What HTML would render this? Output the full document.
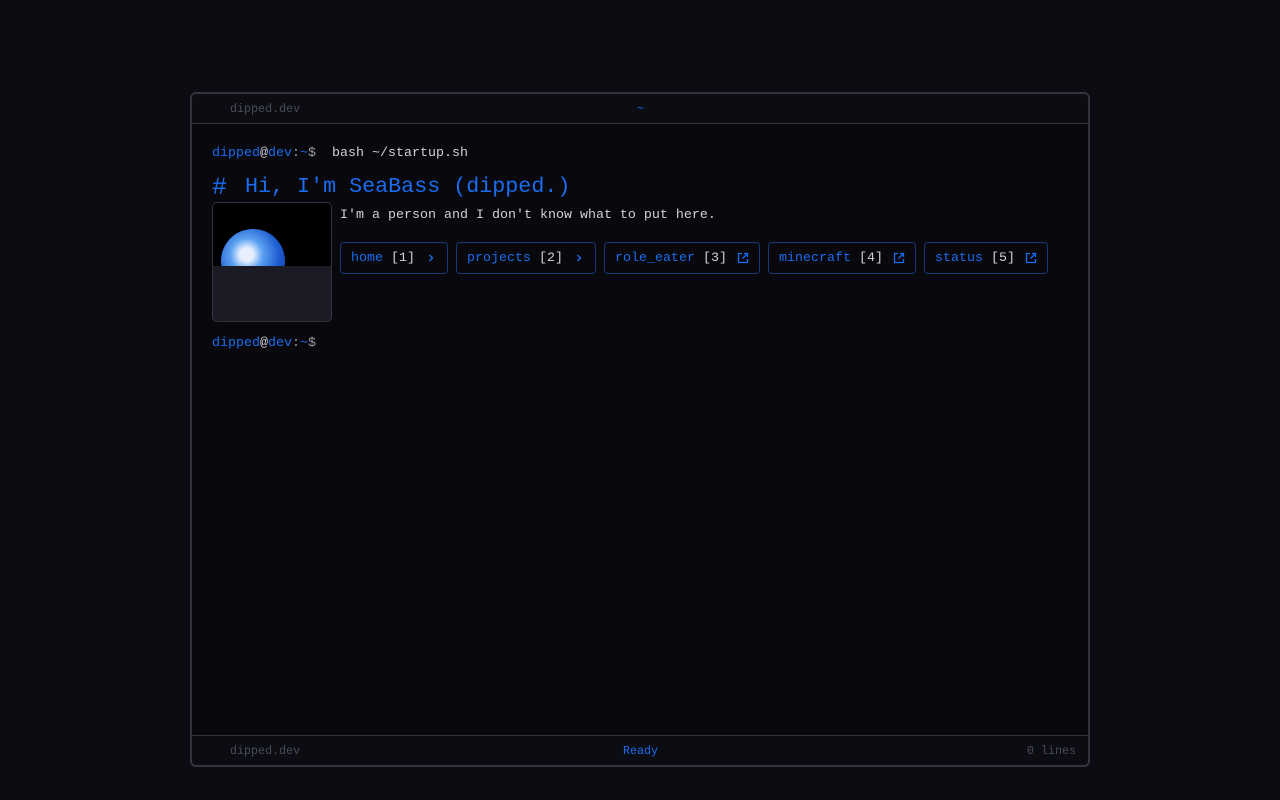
<!DOCTYPE html>
<html><head><meta charset="utf-8"><style>
*{box-sizing:border-box;margin:0;padding:0}
html,body{width:1280px;height:800px;background:#0c0d12;overflow:hidden;font-family:"Liberation Mono",monospace}
.win{position:absolute;left:190px;top:92px;width:900px;height:675px;border:2px solid #34343f;border-radius:6px;background:#08080d;overflow:hidden}
.bar{position:absolute;left:0;right:0;height:30px;background:#0c0d12;font-size:11.7px;color:#4a4b58}
.top{top:0;border-bottom:1px solid #34343f}
.bot{bottom:0;border-top:1px solid #34343f}
.bar span{position:absolute;top:8px}
.b{color:#1a6cf0}
.w{color:#d0d0d6}
.g{color:#9a9aa4}
.line{position:absolute;left:20px;font-size:13.33px;white-space:pre}
h1{position:absolute;left:20px;top:79px;font-size:21.7px;font-weight:normal;color:#1a6cf0;font-family:"Liberation Mono",monospace;white-space:pre}
h1 i{font-style:normal;display:inline-block;width:33px;font-size:25px;vertical-align:-2px}
.pic{position:absolute;left:20px;top:108px;width:120px;height:120px;border:1px solid #34343f;border-radius:5px;overflow:hidden;background:#1b1b25}
.sky{position:absolute;left:0;top:0;width:120px;height:63px;background:#000;overflow:hidden}
.earth{position:absolute;left:8px;top:26px;width:64px;height:64px;border-radius:50%;background:radial-gradient(circle at 40% 40%,#e8f0ff 0 12%,#5aa0f0 30%,#1c5cd0 60%,#0a2a8a 100%)}
.btns{position:absolute;left:148px;top:148px;display:flex;gap:8px}
.btn{height:32px;border:1px solid #173a7a;border-radius:4px;padding:0 10px;display:flex;align-items:center;font-size:13.33px;white-space:pre}
.btn svg{margin-left:10px}
</style></head><body>
<div class="win">
 <div class="bar top"><span style="left:38px">dipped.dev</span><span class="b" style="left:445px">~</span></div>
 <div class="line" style="top:52px"><span class="b">dipped</span><span class="w">@</span><span class="b">dev</span><span class="g">:</span><span class="b">~</span><span class="g">$</span>  <span class="w">bash ~/startup.sh</span></div>
 <h1><i>#</i>Hi, I'm SeaBass (dipped.)</h1>
 <div class="pic"><div class="sky"><div class="earth"></div></div></div>
 <div class="line w" style="left:148px;top:114px">I'm a person and I don't know what to put here.</div>
 <div class="btns">
  <div class="btn"><span><span class="b">home</span> <span class="w">[1]</span></span><svg width="12" height="12" viewBox="0 0 12 12"><path d="M4.5 3l3 3-3 3" fill="none" stroke="#1a6cf0" stroke-width="1.4"/></svg></div>
  <div class="btn"><span><span class="b">projects</span> <span class="w">[2]</span></span><svg width="12" height="12" viewBox="0 0 12 12"><path d="M4.5 3l3 3-3 3" fill="none" stroke="#1a6cf0" stroke-width="1.4"/></svg></div>
  <div class="btn"><span><span class="b">role_eater</span> <span class="w">[3]</span></span><svg width="12" height="12" viewBox="0 0 12 12"><path d="M5 1.5H1.5v9h9V7M7 1.5h3.5V5M10.5 1.5L5.5 6.5" fill="none" stroke="#1a6cf0" stroke-width="1.3"/></svg></div>
  <div class="btn"><span><span class="b">minecraft</span> <span class="w">[4]</span></span><svg width="12" height="12" viewBox="0 0 12 12"><path d="M5 1.5H1.5v9h9V7M7 1.5h3.5V5M10.5 1.5L5.5 6.5" fill="none" stroke="#1a6cf0" stroke-width="1.3"/></svg></div>
  <div class="btn"><span><span class="b">status</span> <span class="w">[5]</span></span><svg width="12" height="12" viewBox="0 0 12 12"><path d="M5 1.5H1.5v9h9V7M7 1.5h3.5V5M10.5 1.5L5.5 6.5" fill="none" stroke="#1a6cf0" stroke-width="1.3"/></svg></div>
 </div>
 <div class="line" style="top:242px"><span class="b">dipped</span><span class="w">@</span><span class="b">dev</span><span class="g">:</span><span class="b">~</span><span class="g">$</span></div>
 <div class="bar bot"><span style="left:38px">dipped.dev</span><span class="b" style="left:431px">Ready</span><span style="right:12px">0 lines</span></div>
</div>
</body></html>
